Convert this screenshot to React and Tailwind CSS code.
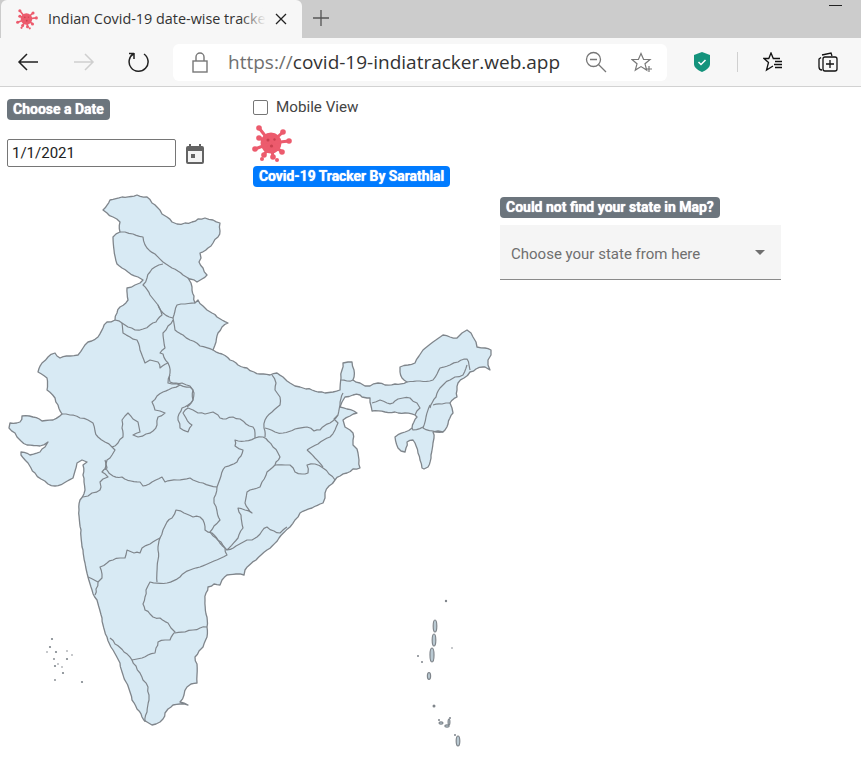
// App.jsx — browser frame + Covid tracker page with the India map
const OUTLINE = `103,210 110,200 122,197 137,195 147,197 152,203 157,207 162,214 167,217 172,222 177,224 185,223 192,222 198,219 205,218 213,220 220,223 220,231 218,237 213,243 208,248 200,253 201,258 199,262 203,268 207,275 202,279 197,282 190,279 188,278 191,283 192,287 194,296 195,303 198,300 203,306 207,310 212,313 217,317 222,320 228,323 222,327 218,333 216,342 213,350 222,354 230,360 238,365 247,368 254,372 260,374 270,375 277,373 283,377 287,381 290,383 295,386 300,387 306,389 312,390 318,392 325,393 333,392 340,390 341,378 342,370 343,363 348,362 352,362 354,370 353,380 360,383 365,386 370,386 378,383 385,385 395,384 407,382 402,378 400,372 400,367 408,365 415,363 419,356 423,350 433,342 443,335 450,337 457,338 462,333 467,330 471,333 473,337 476,342 477,347 485,348 491,350 491,355 488,360 488,365 490,370 485,367 483,367 476,369 470,372 464,378 458,383 457,390 457,397 450,403 452,408 453,413 448,424 443,432 438,431 433,432 434,438 433,443 431,455 428,467 424,469 422,468 420,460 418,453 413,440 407,442 406,448 405,452 401,451 398,448 395,437 405,432 412,428 417,417 415,415 405,413 395,412 385,412 372,411 370,402 370,398 367,398 362,397 360,395 353,395 345,397 342,402 340,407 347,409 357,413 350,416 343,420 345,427 350,430 353,433 353,440 353,445 357,449 358,453 359,460 360,468 353,469 347,473 340,476 335,480 329,486 325,493 325,498 323,503 312,508 300,513 295,520 290,527 279,538 267,550 256,560 245,570 244,575 236,574 227,575 222,580 220,585 214,584 208,587 206,593 205,600 206,614 207,627 207,637 203,647 199,651 195,657 197,664 197,675 197,683 191,684 187,687 184,695 180,702 188,705 180,704 173,705 168,709 165,713 163,719 160,722 156,724 152,725 147,722 142,717 137,709 132,700 126,682 120,663 113,650 107,637 102,618 97,600 92,590 88,577 85,563 83,550 81,530 79,510 80,500 85,490 84,482 83,475 83,465 87,462 82,460 77,463 75,471 73,478 64,483 55,486 48,484 41,479 35,473 31,468 28,463 21,455 21,452 30,455 40,452 45,447 48,442 40,446 27,445 21,441 17,437 15,433 9,428 10,423 20,422 22,416 33,417 42,421 53,420 62,414 58,405 55,398 47,390 47,378 38,372 42,363 48,357 55,353 60,358 70,356 78,355 83,348 88,342 98,337 103,328 107,322 115,320 117,313 120,307 128,300 127,288 135,285 140,283 143,280 138,277 128,272 122,268 117,264 114,250 113,237 120,232 120,222 113,217 107,213`;

const BORDERS = [
  // Gujarat / Rajasthan / MP / Maharashtra
  '62,414 70,415 80,418 88,420 93,423 95,431 98,437 105,442 112,447 115,450 112,455 107,460 106,464 107,468 102,472 108,477 103,479 100,482 101,487 100,490 92,493 88,496 83,497',
  '112,447 118,443 123,437 122,428 122,420 125,416 128,413 133,419 138,422 139,427 140,432 133,435 138,437 146,434 153,431 157,425 158,417 165,413 160,411 155,410 152,402 157,396 163,392 172,388 180,385 172,384 168,383 170,375',
  '180,385 190,387 194,393 193,400 188,405 182,408 179,414 178,420 180,428 188,432 192,425 186,418 183,413 188,408 193,410 198,413 205,414 213,412 218,415 220,418 226,419 233,417 240,419 246,424 253,427 255,433 255,438 245,441 235,440 235,446 243,450 241,456 237,462 225,467 221,476 217,487',
  '105,460 105,469 107,470 113,476 122,477 131,481 140,482 143,486 152,482 162,477 165,482 177,480 190,478 203,483 217,487',
  // Maharashtra / Chhattisgarh / Telangana
  '217,487 214,498 214,503 217,511 220,520 214,526 210,532 216,538 221,542 227,550',
  // Chhattisgarh / Odisha / Jharkhand
  '255,438 263,437 268,441 273,447 278,453 280,457 276,462 275,465 267,472 262,482 260,487 250,490 247,492 245,503 252,513 245,510 238,508 241,515 243,528 238,538 227,550 236,546 247,540 252,540 257,537 262,531 267,527 274,531 280,533 287,527',
  '275,465 285,465 290,465 295,472 302,474 308,473 307,465 315,464 323,468 329,474 335,480',
  // UP / Bihar / Jharkhand / WB
  '272,375 276,383 275,390 280,397 280,405 272,412 265,420 264,428 265,437',
  '265,428 275,432 283,433 295,429 307,427 314,431 320,430 330,423 338,415 340,405 343,393',
  '307,450 315,458 323,467',
  '307,450 318,444 330,437 335,430 338,423 334,419 338,415',
  '341,380 347,381 353,380',
  // North-east
  '407,382 420,381 433,380 437,374 440,368 450,365 458,362 467,359 469,365 470,370',
  '467,365 463,375 455,377 450,380 444,384 440,388 436,397 430,408',
  '433,405 442,404 450,403',
  '430,405 426,417 423,428 433,431 443,432',
  '372,403 380,400 387,403 393,403 398,399 403,398 410,398 417,403 420,408 415,415',
  '423,427 413,430 412,428',
  // J&K / HP / Punjab / Haryana / Uttarakhand
  '120,232 125,232 133,234 143,237 147,248 155,254 163,262 172,268 183,275 188,278',
  '163,264 155,267 150,272 147,278 143,285 150,295 158,305 163,313 173,318',
  '195,303 185,304 177,305 175,311 173,318',
  '173,318 175,330 183,335 190,340 200,346 213,350',
  '115,320 122,323 128,327 135,330 143,329 150,325 156,322 162,315 158,305',
  '122,323 123,333 130,337 137,340 140,350 145,363 150,360 158,362 160,368 168,363 163,354 160,353 165,348 163,333 168,326 173,320',
  '168,363 170,373 170,382 176,383 182,383 190,386 193,390 193,400 187,407',
  // South
  '88,577 98,582 96,589 95,595',
  '98,582 102,578 100,567 107,563 113,560 120,558 125,558 127,550 134,553 140,553 142,548 150,544 160,538 158,550 158,560 157,582',
  '160,538 163,530 167,522 172,518 176,510 184,513 193,517 200,517 203,520 205,530 212,533 218,540 225,548 227,555 214,561 200,567 190,570 180,577 167,583 150,582 146,590 145,597 143,604 145,610 150,614 153,617 160,618 168,623 171,628 175,632 170,640 165,640 158,642 156,648 155,653 148,655 142,658 137,659 132,660 124,652 115,644 110,638',
  '175,633 185,632 193,630 200,628 207,627',
  '132,660 136,666 140,673 143,680 148,687 149,695 149,700 147,712 145,722',
];

const ISLANDS = [
  [52, 639, 1.1], [50, 647, 1.1], [47, 652, 0.8], [56, 652, 1.1], [67, 651, 0.8], [72, 655, 0.8], [54, 659, 0.9],
  [67, 659, 1.1], [58, 664, 0.8], [55, 666, 1.1], [62, 667, 0.8], [63, 673, 1.1], [55, 680, 0.9], [82, 682, 1.1],
  [446, 601, 1.2], [418, 656, 1], [422, 662, 1], [452, 648, 0.8], [434, 706, 1.5], [439, 720, 1], [450, 718, 1], [455, 735, 1],
];

const ANDAMAN = [
  [435, 626, 1.8, 6], [434, 640, 1.8, 6], [432, 655, 2, 7], [429, 676, 1.6, 3.5],
  [441, 723, 2, 1.2], [447, 726, 2.2, 1.2], [449, 722, 0.9, 3], [458, 741, 1.8, 5],
];

const VIRUS_SPIKES = [[-12, -15], [12, -11], [18, -2], [11, 9], [2, 14], [-7, 12], [-16, 6], [-12, -5]];
const VIRUS_DOTS = [[-9, 16], [6, 17]];

// breaks a long segment into small jagged steps, so the borders look hand-traced
function jag(points) {
  const pts = points.trim().split(/\s+/).map(p => p.split(',').map(Number));
  const out = [];
  pts.forEach(([x, y], i) => {
    out.push(`${x},${y}`);
    const next = pts[i + 1];
    if (!next) return;
    const dx = next[0] - x;
    const dy = next[1] - y;
    const len = Math.hypot(dx, dy);
    const steps = Math.floor(len / 3);
    for (let s = 1; s < steps; s++) {
      const off = Math.sin(x * 12.9 + y * 78.2 + s * 37.7) * 0.8;
      out.push(`${(x + (dx * s) / steps - (dy / len) * off).toFixed(1)},${(y + (dy * s) / steps + (dx / len) * off).toFixed(1)}`);
    }
  });
  return out.join(' ');
}

function IndiaMap() {
  return (
    <svg width="500" height="570" viewBox="0 190 500 570" className="block shrink-0" fill="none" stroke="#7f858b" strokeLinejoin="round">
      <polygon points={jag(OUTLINE)} fill="#d8eaf4" strokeWidth="1.3" />
      {BORDERS.map((pts, i) => <polyline key={i} points={jag(pts)} strokeWidth="1.2" />)}
      {ISLANDS.map(([x, y, r], i) => <circle key={i} cx={x} cy={y} r={r} fill="#7f858b" stroke="none" />)}
      {ANDAMAN.map(([x, y, rx, ry], i) => <ellipse key={i} cx={x} cy={y} rx={rx} ry={ry} fill="#b9c9d2" strokeWidth="1.2" />)}
    </svg>
  );
}

function Virus({ size }) {
  return (
    <svg width={size} height={size} viewBox="-19 -20 40 40" className="block">
      <circle r="10.5" fill="#ec5b6d" />
      {VIRUS_SPIKES.map(([x, y], i) => (
        <g key={i}>
          <line x1="0" y1="0" x2={x} y2={y} stroke="#ec5b6d" strokeWidth="3" />
          <circle cx={x} cy={y} r="2.8" fill="#ec5b6d" />
        </g>
      ))}
      {VIRUS_DOTS.map(([x, y], i) => <circle key={i} cx={x} cy={y} r="2" fill="#ec5b6d" />)}
      <circle cx="-3" cy="-3" r="1.500" fill="#c9414f" />
      <circle cx="3.500" cy="-3.500" r="1.200" fill="#c9414f" />
      <circle cx="0.500" cy="3" r="1.600" fill="#c9414f" />
    </svg>
  );
}

function Badge({ color, children }) {
  return (
    <span className={`inline-block h-[21px] rounded-[4px] px-[6px] text-[14px] font-bold leading-[20px] whitespace-nowrap text-white [text-shadow:0_0_1px_#fff] ${color}`}>
      {children}
    </span>
  );
}

function TabBar() {
  return (
    <div className="flex h-[38px] bg-[#cccccc]">
      <div className="relative ml-[1px] flex h-[38px] w-[301px] items-center rounded-t-[6px] bg-[#f7f7f7] pl-[15px]">
        <Virus size={22} />
        <span className="ml-[10px] w-[217px] whitespace-nowrap text-[14.400px] leading-[18px] text-[#333] font-['Open_Sans',sans-serif]">
          Indian Covid-19 date-wise tracke
        </span>
        <div className="absolute left-[240px] top-[8px] h-[20px] w-[25px] bg-gradient-to-r from-transparent to-[#f7f7f7]" />
        <svg width="12" height="12" viewBox="0 0 12 12" className="ml-[10px]" stroke="#222" strokeWidth="1.3">
          <path d="M1 1l10 10M11 1L1 11" />
        </svg>
      </div>
      <svg width="18" height="18" viewBox="0 0 18 18" className="ml-[10px] mt-[9px]" stroke="#555" strokeWidth="1.3">
        <path d="M9 1v16M1 9h16" />
      </svg>
      <div className="ml-auto mr-[19px] mt-[5px] h-[1px] w-[13px] bg-[#222]" />
    </div>
  );
}

function ToolButton({ width, children }) {
  return <div className={`flex items-center justify-center ${width}`}>{children}</div>;
}

function Toolbar() {
  return (
    <div className="flex h-[49px] items-center border-b border-[#d2d2d2] bg-[#f7f7f7]">
      <ToolButton width="w-[56px]">
        <svg width="22" height="18" viewBox="0 0 22 18" fill="none" stroke="#222" strokeWidth="1.5"><path d="M21 9H2M10 1L2 9l8 8" /></svg>
      </ToolButton>
      <ToolButton width="w-[55px]">
        <svg width="22" height="18" viewBox="0 0 22 18" fill="none" stroke="#cfcfcf" strokeWidth="1.5"><path d="M1 9h19M12 1l8 8-8 8" /></svg>
      </ToolButton>
      <ToolButton width="w-[55px]">
        <svg width="22" height="22" viewBox="0 0 22 22" fill="none" stroke="#222" strokeWidth="1.5"><path d="M6 2.500A9.500 9.500 0 1 0 16 3M6 2v6M1 2.500h5" /></svg>
      </ToolButton>
      <div className="ml-[7px] flex h-[37px] w-[494px] items-center rounded-[6px] bg-white pl-[19px]">
        <svg width="16" height="21" viewBox="0 0 16 21" fill="none" stroke="#777" strokeWidth="1.4"><rect x="1" y="9" width="14" height="11" /><path d="M4 9V5a4 4 0 0 1 8 0v4" /></svg>
        <span className="ml-[20px] text-[19px] leading-[26px] whitespace-nowrap text-[#333] font-['Open_Sans',sans-serif]">
          <span className="text-[#707070]">https://</span>covid-19-indiatracker.web.app
        </span>
        <svg width="22" height="22" viewBox="0 0 22 22" fill="none" stroke="#777" strokeWidth="1.3" className="ml-auto">
          <circle cx="8.500" cy="8.500" r="7" /><path d="M5 8.500h7M13.500 13.500L21 21" />
        </svg>
        <svg width="22" height="21" viewBox="0 0 22 21" fill="none" stroke="#777" strokeWidth="1.2" className="ml-[24px] mr-[14px]">
          <path d="M10 1.500l2.600 6h6.400l-5 4.300 1.700 6.300-5.700-3.500-5.700 3.500L6 11.800 1 7.500h6.400zM18 14v6M15 17h6" />
        </svg>
      </div>
      <ToolButton width="w-[70px]">
        <svg width="16" height="20" viewBox="0 0 16 20">
          <path d="M8 0l8 3v9c0 3.500-3.500 6-8 8-4.500-2-8-4.500-8-8V3z" fill="#14937c" />
          <path d="M4.500 10l2.500 2.500 4.500-4.500" fill="none" stroke="#fff" strokeWidth="1.500" />
        </svg>
      </ToolButton>
      <div className="h-[20px] w-[1px] bg-[#d0d0d0]" />
      <ToolButton width="w-[70px]">
        <svg width="20" height="20" viewBox="0 0 20 20" fill="none" stroke="#111" strokeWidth="1.3">
          <path d="M10 14l-6.500 4 2-7.500L1 6.500h4.800L8 1l2.300 5.500H17M12 9.500h7M11 12.500h8M12 15.500h7" />
        </svg>
      </ToolButton>
      <ToolButton width="w-[40px]">
        <svg width="20" height="20" viewBox="0 0 20 20" fill="none" stroke="#111" strokeWidth="1.3">
          <path d="M3 5.500L1 7v8c0 2 1 3 3 3" /><path d="M4 3l9-2 1 3" /><rect x="5" y="5" width="14" height="14" rx="2" /><path d="M12 8v8M8 12h8" />
        </svg>
      </ToolButton>
    </div>
  );
}

function CalendarIcon() {
  return (
    <svg width="18" height="20" viewBox="0 0 18 20" className="ml-[10px] mt-[5px]">
      <path d="M3 0h2v2h8V0h2v2h1a2 2 0 0 1 2 2v14a2 2 0 0 1-2 2H2a2 2 0 0 1-2-2V4a2 2 0 0 1 2-2h1z" fill="#636363" />
      <rect x="2" y="7" width="14" height="11" fill="#f3f3f3" />
      <rect x="5" y="10" width="4" height="4" fill="#636363" />
    </svg>
  );
}

export default function App() {
  return (
    <div className="min-h-[764px] overflow-hidden bg-white font-['Roboto',sans-serif]">
      <TabBar />
      <Toolbar />

      <div className="flex h-[103px] pl-[7px] pt-[12px]">
        <div className="mt-[-2px] w-[246px]">
          <Badge color="bg-[#6c757d]">Choose a Date</Badge>
          <div className="mt-[18px] flex">
            <div className="h-[28px] w-[169px] rounded-[2px] border border-[#767676] pl-[4px] text-[15px] leading-[26px] text-[#222]">1/1/2021</div>
            <CalendarIcon />
          </div>
        </div>
        <div>
          <div className="flex items-center">
            <span className="h-[15px] w-[15px] rounded-[2px] border border-[#767676] bg-white" />
            <span className="ml-[8px] text-[15.200px] leading-[16px] text-[#444]">Mobile View</span>
          </div>
          <div className="ml-[-1px] mt-[8px]"><Virus size={40} /></div>
          <div className="mt-[1px]"><Badge color="bg-[#007bff] tracking-[-0.07px]">Covid-19 Tracker By Sarathlal</Badge></div>
        </div>
      </div>

      <div className="flex">
        <IndiaMap />
        <div className="mt-[5px]">
          <Badge color="bg-[#6c757d]">Could not find your state in Map?</Badge>
          <div className="mt-[6px] flex h-[55px] w-[281px] items-center justify-between border-b border-[#8a8a8a] bg-[#f5f5f5] pl-[11px] pr-[16px]">
            <span className="mt-[4px] text-[15px] text-[#6f6f6f]">Choose your state from here</span>
            <span className="h-0 w-0 border-x-[5px] border-t-[5px] border-x-transparent border-t-[#6f6f6f]" />
          </div>
        </div>
      </div>
    </div>
  );
}
